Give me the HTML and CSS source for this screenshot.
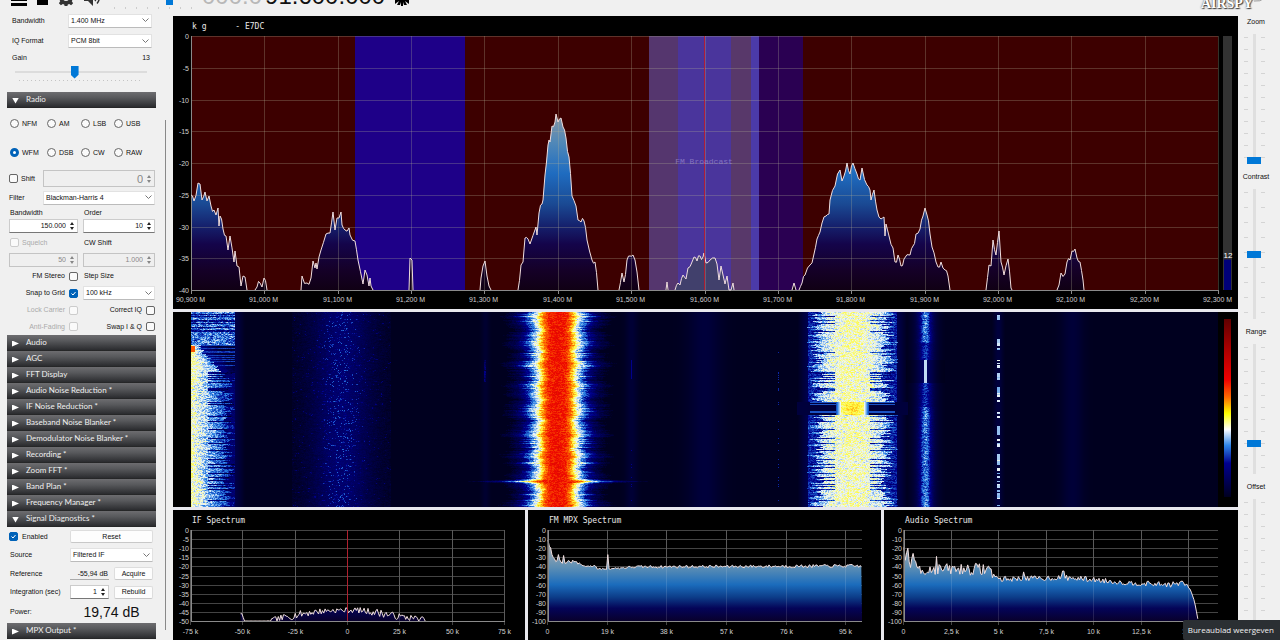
FILE: index.html
```html
<!DOCTYPE html>
<html lang="en">
<head>
<meta charset="utf-8">
<title>SDR receiver</title>
<link rel="stylesheet" href="styles.css">
</head>
<body>
<div class="app">
  <header class="toolbar">
    <button class="tool" aria-label="Menu"><svg width="16" height="14" viewBox="0 0 16 14"><path d="M0 0h16v3H0zM0 6h16v3H0zM0 11h16v3H0z"/></svg></button>
    <button class="tool" aria-label="Stop"><svg width="11" height="12" viewBox="0 0 11 12"><path d="M0 0h11v11H0z"/></svg></button>
    <button class="tool" aria-label="Settings"><svg width="16" height="16" viewBox="0 0 16 16"><path fill="#333" fill-rule="evenodd" d="M6.600 0h2.800l.4 2.200 1.400.6 1.900-1.300 2 2-1.300 1.900.6 1.400 1.600.4v2.200l-1.600.5-.6 1.400 1.300 1.900-2 2-1.900-1.300-1.400.6L9.400 16H6.600l-.4-1.500-1.400-.6-1.900 1.300-2-2 1.300-1.900-.6-1.400L0 9.400V7.200l1.600-.4.6-1.400L.9 3.500l2-2 1.900 1.300 1.400-.6zM8 5a3 3 0 1 0 0 6 3 3 0 0 0 0-6z"/></svg></button>
    <button class="tool" aria-label="Mute"><svg width="18" height="16" viewBox="0 0 18 16"><path fill="#333" d="M0 5h4l5-5v16l-5-5H0z"/><path fill="none" stroke="#333" stroke-width="1.500" d="M11 5q2 3 0 6M13 2.500q4.500 5.500 0 11"/></svg></button>
    <input class="volume" type="range" min="0" max="100" value="74" aria-label="Volume">
    <div class="frequency"><span class="leading">000.0</span><span>91.600.000</span></div>
    <button class="tool" aria-label="Tuning mode"><svg width="14" height="14" viewBox="0 0 14 14"><path d="M0 12V0l6 7V0h2v7l6-7v12l-4-3 2 4H9l-1-3v4H6v-4l-1 3H2l2-4z"/></svg></button>
    <div class="logo">AIRSPY<svg width="14" height="14" viewBox="0 0 14 14"><path fill="none" stroke="#999" d="M1 4q6 1 11-3"/></svg></div>
  </header>

  <aside class="sidebar">
    <div class="controls">
      <div class="form-row"><label for="sr">Bandwidth</label><select id="sr" class="w-source"><option>1.400 MHz</option></select></div>
      <div class="form-row tall"><label for="iq">IQ Format</label><select id="iq" class="w-source"><option>PCM 8bit</option></select></div>
      <div class="form-row short"><label for="gain">Gain</label><output class="gain-value" for="gain">13</output></div>
      <input class="gain" id="gain" type="range" min="0" max="29" value="13">
      <button class="section open">Radio</button>

      <div class="modes">
        <label><input type="radio" name="mode">NFM</label>
        <label><input type="radio" name="mode">AM</label>
        <label><input type="radio" name="mode">LSB</label>
        <label><input type="radio" name="mode">USB</label>
        <label><input type="radio" name="mode" checked>WFM</label>
        <label><input type="radio" name="mode">DSB</label>
        <label><input type="radio" name="mode">CW</label>
        <label><input type="radio" name="mode">RAW</label>
      </div>

      <div class="wide-row"><label><input type="checkbox">Shift</label><span class="spin big off"><input type="text" value="0" aria-label="Shift frequency" disabled><i></i></span></div>
      <div class="wide-row"><label for="filter">Filter</label><select id="filter"><option>Blackman-Harris 4</option></select></div>
      <div class="pairs">
        <label class="caption" for="bw">Bandwidth</label><label class="caption" for="order">Order</label>
        <span class="spin"><input id="bw" type="text" value="150.000"><i></i></span><span class="spin"><input id="order" type="text" value="10"><i></i></span>
        <label class="off"><input type="checkbox" disabled>Squelch</label><label for="cw">CW Shift</label>
        <span class="spin off"><input type="text" value="50" aria-label="Squelch level" disabled><i></i></span><span class="spin off"><input id="cw" type="text" value="1.000" disabled><i></i></span>
        <label class="end">FM Stereo<input type="checkbox"></label><label for="step">Step Size</label>
        <label class="end">Snap to Grid<input type="checkbox" checked></label><select id="step"><option>100 kHz</option></select>
        <label class="end off">Lock Carrier<input type="checkbox" disabled></label><label class="end">Correct IQ<input type="checkbox"></label>
        <label class="end off">Anti-Fading<input type="checkbox" disabled></label><label class="end">Swap I &amp; Q<input type="checkbox"></label>
      </div>

      <button class="section">Audio</button>
      <button class="section">AGC</button>
      <button class="section">FFT Display</button>
      <button class="section">Audio Noise Reduction *</button>
      <button class="section">IF Noise Reduction *</button>
      <button class="section">Baseband Noise Blanker *</button>
      <button class="section">Demodulator Noise Blanker *</button>
      <button class="section">Recording *</button>
      <button class="section">Zoom FFT *</button>
      <button class="section">Band Plan *</button>
      <button class="section">Frequency Manager *</button>
      <button class="section open">Signal Diagnostics *</button>

      <div class="diagnostics">
        <label><input type="checkbox" checked>Enabled</label><button class="btn span">Reset</button>
        <label for="src">Source</label><select id="src" class="span"><option>Filtered IF</option></select>
        <label for="ref">Reference</label><input id="ref" class="reading" type="text" value="-55,94 dB" readonly><button class="btn">Acquire</button>
        <label for="int">Integration (sec)</label><span class="spin"><input id="int" type="text" value="1"><i></i></span><button class="btn">Rebuild</button>
        <span>Power:</span><output class="power span">19,74 dB</output>
      </div>
      <button class="section">MPX Output *</button>
    </div>
    <div class="scrollbar"></div>
  </aside>

  <main class="displays">
    <section class="panel" id="spectrum"></section>
    <section class="panel waterfall">
      <canvas id="waterfall"></canvas>
      <div class="scale"></div>
    </section>
    <div class="small-panels">
      <section class="panel" id="if"></section>
      <section class="panel" id="mpx"></section>
      <section class="panel" id="audio"></section>
    </div>
  </main>

  <aside class="levels">
    <label for="zoom">Zoom</label><input id="zoom" type="range" min="0" max="100" value="0">
    <label for="contrast">Contrast</label><input id="contrast" class="sparse" type="range" min="0" max="100" value="50">
    <label for="range">Range</label><input id="range" type="range" min="0" max="100" value="22">
    <label for="offset">Offset</label><input id="offset" type="range" min="0" max="100" value="0">
  </aside>
</div>
<div class="tooltip" role="tooltip">Bureaublad weergeven</div>
<script src="app.js"></script>
</body>
</html>
```

FILE: styles.css
```css
* { box-sizing: border-box; }

body {
  margin: 0;
  background: #f0f0f0;
  color: #111;
  font: 7px/10px "Liberation Sans", Arial, sans-serif;
  overflow: hidden;
}

button, input, select, output { font: inherit; color: inherit; margin: 0; }

.app {
  display: grid;
  grid-template: 12px minmax(0, 1fr) / 173px minmax(0, 1fr) 42px;
  height: 100vh;
}

/* toolbar */
.toolbar {
  grid-column: 1 / -1;
  display: flex;
  align-items: flex-end;
  gap: 10px;
  padding: 0 28px 6px 11px;
  overflow: hidden;
}
.tool { border: 0; padding: 0; background: none; line-height: 0; flex: none; }
.tool svg { display: block; }
.volume {
  appearance: none;
  width: 80px;
  height: 16px;
  margin: 0 0 -3px 0;
  background: repeating-linear-gradient(90deg, #ccc 0 1px, transparent 1px 11px) 2px 100% / 78px 2px no-repeat;
}
.volume::-webkit-slider-thumb { appearance: none; width: 7px; height: 12px; margin-top: -4px; background: #0078d7; }
.frequency { font-size: 24px; line-height: 24px; color: #111; margin-bottom: -2px; display: flex; gap: 3px; }
.leading { color: #b8b8b8; }
.logo {
  display: flex;
  align-items: flex-end;
  margin: 0 -15px -5px auto;
  font: bold 14px/14px "Liberation Serif", serif;
  color: #fff;
  text-shadow: 0 0 2px #333, 1px 1px 1px #444;
}

/* sidebar */
.sidebar { display: flex; padding-left: 7px; overflow: hidden; }
.controls { width: 149px; flex: none; }
.scrollbar { width: 1px; margin: 108px 0 10px 9px; background: #888; }
.controls label { display: flex; align-items: center; gap: 4px; white-space: nowrap; }

.form-row { display: flex; align-items: center; justify-content: space-between; height: 17px; padding: 0 4px 0 5px; }
.form-row.tall { height: 24px; }
.form-row.short { height: 9px; }
.gain-value { padding-right: 2px; }

select {
  appearance: none;
  width: 100%;
  height: 14px;
  padding: 0 10px 0 2px;
  border: 1px solid #e2e2e2;
  border-bottom-color: #bbb;
  border-radius: 1px;
  background: #fff url("data:image/svg+xml,%3Csvg xmlns='http://www.w3.org/2000/svg' width='7' height='5'%3E%3Cpath d='M.5 .5l3 3 3-3' fill='none' stroke='%23777'/%3E%3C/svg%3E") right 2px center no-repeat;
}
.w-source { width: 84px; }

.gain {
  appearance: none;
  display: block;
  width: 132px;
  height: 20px;
  margin: 0 8px 10px;
  background:
    linear-gradient(#dcdcdc, #dcdcdc) 0 9px / 100% 2px no-repeat,
    repeating-linear-gradient(90deg, #c4c4c4 0 1px, transparent 1px 4px) 4px 18px / 124px 1px no-repeat;
}
.gain::-webkit-slider-thumb {
  appearance: none;
  width: 8px;
  height: 13px;
  background: #0078d7;
  clip-path: polygon(0 0, 100% 0, 100% 72%, 50% 100%, 0 72%);
}

.section {
  display: flex;
  align-items: center;
  gap: 7px;
  width: 100%;
  height: 16px;
  padding: 0 0 2px 5px;
  border: 0;
  background: linear-gradient(#6d6d70, #58595c 35%, #2c2d30 92%, #222);
  color: #f0f0f0;
  font: 8px/12px Lato, sans-serif;
  text-align: left;
}
.section::before {
  content: "";
  width: 7px;
  height: 6px;
  margin-top: 3px;
  background: #fff;
  clip-path: polygon(0 0, 100% 50%, 0 100%);
}
.section.open::before { clip-path: polygon(0 0, 100% 0, 50% 100%); }

input[type="radio"], input[type="checkbox"] {
  appearance: none;
  flex: none;
  width: 9px;
  height: 9px;
  border: 1px solid #666;
  background: #fafafa;
}
input[type="radio"] { border-radius: 50%; }
input[type="radio"]:checked { border: 3px solid #0062b8; background: #fff; }
input[type="checkbox"] { border-radius: 2px; }
input[type="checkbox"]:checked {
  border-color: #0062b8;
  background: #0062b8 url("data:image/svg+xml,%3Csvg xmlns='http://www.w3.org/2000/svg' width='7' height='7'%3E%3Cpath d='M1.500 3.500l1.500 1.500 2.500-3' fill='none' stroke='white'/%3E%3C/svg%3E") center no-repeat;
}
input[type="checkbox"]:disabled { border-color: #ccc; }
label.off { color: #aaa; }

.modes {
  display: grid;
  grid-template-columns: 37px 34px 33px auto;
  grid-auto-rows: 29px;
  padding: 1px 0 2px 3px;
}
.modes label { gap: 3px; }

.wide-row { display: grid; grid-template-columns: 34px 1fr; align-items: center; height: 19px; padding: 0 1px 0 2px; }
.wide-row label { gap: 3px; }

.spin {
  display: flex;
  align-items: center;
  width: 100%;
  height: 14px;
  border: 1px solid #ccc;
  border-bottom-color: #777;
  background: #fff;
}
.spin input { flex: 1; width: 0; min-width: 0; padding: 0 1px; border: 0; background: none; text-align: right; }
.spin i {
  width: 10px;
  height: 10px;
  background: url("data:image/svg+xml,%3Csvg xmlns='http://www.w3.org/2000/svg' width='6' height='8'%3E%3Cpath d='M3 0l2 3H1zM3 8l2-3H1z' fill='%23222'/%3E%3C/svg%3E") center no-repeat;
}
.spin.off { background: #efefef; border-color: #c4c4c4; color: #888; }
.spin.off i { opacity: .5; }
.spin.big { height: 17px; font-size: 11px; }

.pairs {
  display: grid;
  grid-template: 11px 16px 17px 17px 16px 18px 16px 17px / 69px 1fr;
  column-gap: 5px;
  align-items: center;
  padding: 0 1px 0 2px;
}
.pairs label { gap: 3px; padding-left: 1px; }
.pairs label.end { justify-content: flex-end; padding: 0; gap: 4px; }

.diagnostics {
  display: grid;
  grid-template: 19px 18px 19px 18px 22px / 56px 1fr 1fr;
  column-gap: 5px;
  align-items: center;
  padding: 0 3px 0 2px;
}
.diagnostics label, .diagnostics > span:not(.spin) { padding-left: 1px; margin-right: -5px; }
.diagnostics label:first-child { padding: 0; }
.span { grid-column: span 2; }
.btn { width: 100%; height: 13px; padding: 0; border: 1px solid #ddd; border-bottom-color: #c8c8c8; border-radius: 2px; background: #fdfdfd; line-height: 10px; }
.reading { width: 100%; height: 12px; padding: 0 1px; border: 0; border-bottom: 1px solid #aaa; background: none; text-align: right; }
.power { font-size: 14px; line-height: 16px; text-align: center; color: #111; }

/* displays */
.displays {
  display: grid;
  grid-template-rows: minmax(0, 293fr) minmax(0, 195fr) minmax(0, 130fr);
  gap: 3px;
  padding-top: 4px;
  background: linear-gradient(#f0f0f0 4px, #e8e8ee 4px);
}
.panel { position: relative; min-width: 0; overflow: hidden; background: #000; }
.panel svg { display: block; width: 100%; height: 100%; }
.small-panels { display: grid; grid-template-columns: minmax(0, 352fr) minmax(0, 354fr) minmax(0, 354fr); gap: 3px; }
.waterfall { display: grid; grid-template-columns: minmax(0, 1fr) 7px; column-gap: 6px; padding: 0 7px 0 18px; }
.waterfall canvas { display: block; width: 100%; height: 100%; min-height: 0; }
.scale {
  margin: 7px 0 10px;
  background: linear-gradient(#600000, #b00000 18%, #f00000 34%, #ff6a00 44%, #ffff00 53%, #ffffff 62%, #2e86e8 71%, #000090 81%, #000020);
}

.axis { font: 7px "Liberation Sans", Arial, sans-serif; fill: #d0d0d0; }
.title { font: 8px "DejaVu Sans Mono", monospace; fill: #e8e8e8; white-space: pre; }
.band-name { font: 8px "Liberation Mono", monospace; fill: #a99bd8; opacity: .6; }
.meter-value { font: 8px "Liberation Sans", Arial, sans-serif; fill: #fff; }
.grid { stroke: #b4b496; stroke-opacity: .28; }
.small-grid { stroke: #444; }
.frame { stroke: #8a8a8a; }
.trace { fill: none; stroke: #f0dede; stroke-width: 1; }
.center { stroke: #c01828; stroke-opacity: .85; }

/* right sliders */
.levels { display: flex; flex-direction: column; align-items: center; padding-top: 4px; padding-right: 10px; overflow: hidden; }
.levels label { margin-left: 4px; height: 11px; line-height: 12px; flex: none; }
.levels input {
  appearance: none;
  writing-mode: vertical-lr;
  direction: rtl;
  flex: none;
  width: 24px;
  height: 130px;
  margin: 7px 0;
  background:
    linear-gradient(#dfdfdf, #dfdfdf) center / 3px 100% no-repeat,
    repeating-linear-gradient(#d4d4d4 0 1px, transparent 1px 12px) 2px 3px / 4px 124px no-repeat,
    repeating-linear-gradient(#d4d4d4 0 1px, transparent 1px 12px) 19px 3px / 4px 124px no-repeat;
}
.levels .sparse {
  background:
    linear-gradient(#dfdfdf, #dfdfdf) center / 3px 100% no-repeat,
    repeating-linear-gradient(#d4d4d4 0 1px, transparent 1px 15px) 2px 3px / 4px 124px no-repeat,
    repeating-linear-gradient(#d4d4d4 0 1px, transparent 1px 15px) 19px 3px / 4px 124px no-repeat;
}
.levels input::-webkit-slider-thumb { appearance: none; width: 14px; height: 7px; background: #0078d7; }

.tooltip {
  position: absolute;
  right: 0;
  bottom: 0;
  padding: 5px 6px 5px 5px;
  border-radius: 2px 0 0 2px;
  background: #2b2f33;
  color: #f0f0f0;
  font: 8px/10px "Open Sans", sans-serif;
}
```

FILE: app.js
```js
let seed = 7;
const rnd = () => {
  seed = (seed * 1664525 + 1013904223) >>> 0;
  return seed / 4294967296;
};
const esc = s => String(s).replace(/&/g, "&amp;");
const line = (x1, y1, x2, y2, c) => `<path class="${c}" d="M${x1} ${y1}L${x2} ${y2}"/>`;
const text = (x, y, s, c, anchor) => `<text x="${x}" y="${y}" class="${c}" text-anchor="${anchor || "start"}">${esc(s)}</text>`;

/* Signal groups: [position across a 1027 wide span, depth across 254]. */
const groups = [
  "0,159 3,165 7,147 9,148 11,164 14,156 16,165 18,160 20,170 23,174 25,179 27,172 28,190 29,180 32,193 35,200 37,214 39,200 43,226 44,215 46,230 48,231 50,250 52,240 54,241 56,254",
  "64,254 66,251 69,247 71,251 73,242 76,254",
  "110,254 111,240 116,247 120,242 122,225 124,232 125,227 126,233 128,221 130,214 135,198 139,197 142,176 144,194 146,182 148,182 150,176 151,189 154,194 158,192 159,199 164,205 167,224 172,248 174,234 176,239 178,250 179,242 180,250 182,254",
  "218,254 219,222 221,224 222,254",
  "289,254 290,242 292,230 294,225 296,240 298,250 300,254",
  "327,254 330,229 332,226 334,202 337,203 339,208 345,191 346,199 348,177 351,168 352,164 354,139 357,109 358,104 359,106 361,90 364,86 365,78 367,86 370,82 372,91 375,102 378,121 381,160 385,170 387,184 390,186 393,185 396,204 401,224 404,226 407,254",
  "428,254 431,237 433,246 436,224 439,220 442,219 444,224 446,236 448,254",
  "475,254 476,246 477,254",
  "484,254 487,247 489,249 492,239 495,243 497,232 501,226 503,221 506,225 509,220 512,221 513,217 515,227 519,224 524,222 526,228 528,244 530,230 532,239 534,248 536,240 538,254 542,247 543,254",
  "601,254 603,247 605,254",
  "608,254 611,247 614,239 619,229 623,218 626,203 629,196 631,187 635,180 638,178 639,164 644,150 649,134 651,145 653,140 656,127 659,138 662,127 666,138 669,144 671,132 676,149 679,154 680,164 683,154 686,174 690,183 693,181 694,200 695,188 698,200 702,212 704,226 707,219 710,230 713,223 719,219 722,210 725,198 729,193 732,180 734,172 736,179 739,198 741,211 745,226 747,231 750,226 754,234 757,240 759,254",
  "795,254 798,229 800,230 802,204 805,219 808,195 810,226 813,239 817,223 820,252 821,254",
  "866,254 868,249 870,237 874,238 876,226 879,224 881,215 884,213 886,222 889,226 892,244 893,254"
];

function drawSpectrum() {
  const el = document.getElementById("spectrum");
  const W = el.clientWidth, H = el.clientHeight;
  const L = 18, T = 20, w = W - 38, h = H - 39;
  const X = v => L + v / 1027 * w, Y = v => T + v / 254 * h;
  const band = (a, b, c) => `<rect x="${X(a)}" y="${T}" width="${X(b) - X(a)}" height="${h}" fill="${c}"/>`;
  let s = `<defs><linearGradient id="deep" gradientUnits="userSpaceOnUse" x1="0" x2="0" y1="${T}" y2="${T + h}">
    <stop offset=".3" stop-color="#8a96a4"/><stop offset=".42" stop-color="#5088b8"/><stop offset=".54" stop-color="#1f6cc0"/>
    <stop offset=".66" stop-color="#1a4a94"/><stop offset=".75" stop-color="#15206c"/><stop offset=".82" stop-color="#14044a"/>
    <stop offset=".92" stop-color="#150028"/><stop offset="1" stop-color="#100014"/></linearGradient></defs>`;
  s += band(0, 1027, "#3d0000") + band(164, 274, "#1e0088") + band(458, 487, "#55366e") +
    band(487, 540, "#4a359c") + band(540, 560, "#58386a") + band(560, 568, "#4b3aa8") + band(568, 612, "#2a0052");
  const paths = groups.map(g => {
    const raw = g.split(" ").map(p => p.split(",").map(Number));
    const out = [];
    raw.forEach((p, i) => {
      if (i && p[0] - raw[i - 1][0] > 2) {
        const q = raw[i - 1];
        out.push([(p[0] + q[0]) / 2, Math.min(254, (p[1] + q[1]) / 2 + rnd() * 8 - 4)]);
      }
      out.push(p);
    });
    return {
      start: X(raw[0][0]),
      points: out.map(p => X(p[0]).toFixed(1) + " " + Y(p[1]).toFixed(1)).join("L")
    };
  });
  paths.forEach((p, i) => { s += `<path d="M${p.start} ${T + h}L${p.points}Z" fill="${i === 8 ? "#41406c" : "url(#deep)"}"/>`; });
  for (let i = 0; i <= 14; i++) {
    const x = Math.round(L + w * i / 14) + .5;
    s += line(x, T, x, T + h, "grid") + line(x, T + h, x, T + h + 4, "frame");
    s += text(x - 1, T + h + 12, (90900 + i * 100).toString().replace(/(\d\d)(\d+)/, "$1,$2") + " M", "axis", "middle");
  }
  for (let i = 0; i <= 8; i++) {
    const y = Math.round(T + h * i / 8) + .5;
    s += line(L, y, L + w, y, "grid") + text(L - 2, y + 2, i ? -5 * i : 0, "axis", "end");
  }
  s += line(L + .5, T, L + .5, T + h, "frame") + line(L, T + h + .5, L + w, T + h + .5, "frame");
  paths.forEach(p => { s += `<path class="trace" d="M${p.points}"/>`; });
  const mid = Math.round(X(513.5)) - .5;
  s += line(mid, T, mid, T + h, "center");
  s += text(X(513), T + h / 2 + 1, "FM Broadcast", "band-name", "middle");
  s += text(19, 13, "k g      - E7DC", "title");
  s += `<rect x="${W - 15}" y="${T}" width="9" height="${h}" fill="#333"/><rect x="${W - 14}" y="${T + h * .88}" width="7" height="${h * .12}" fill="#000078"/>`;
  s += text(W - 10, T + h * .875, "12", "meter-value", "middle");
  el.innerHTML = `<svg>${s}</svg>`;
}

/* Keypoints are [fraction of the span, dB, jitter in dB]; the trace is interpolated between them. */
function drawSmall(id, title, min, step, span, ticks, keys, spikes, center) {
  const el = document.getElementById(id);
  const W = el.clientWidth, H = el.clientHeight;
  const L = id === "if" ? 18 : 20, T = 20, w = W - L - 20, h = H - 39;
  const Y = d => T + h * Math.min(1, Math.max(0, d / min));
  let s = `<defs><linearGradient id="g-${id}" gradientUnits="userSpaceOnUse" x1="0" x2="0" y1="${T}" y2="${T + h}">
    <stop offset=".2" stop-color="#a0a8b0"/><stop offset=".4" stop-color="#6090b4"/><stop offset=".6" stop-color="#1b6cbc"/>
    <stop offset=".74" stop-color="#0c3c88"/><stop offset=".86" stop-color="#040458"/><stop offset="1" stop-color="#08002c"/></linearGradient></defs>`;
  ticks.forEach(([v, label]) => {
    const x = Math.round(L + w * v / span) - .5;
    s += line(x, T, x, T + h + 4, "small-grid") + text(x, T + h + 13, label, "axis", "middle");
  });
  for (let d = 0; d >= min; d -= step) {
    const y = Math.round(Y(d)) + .5;
    s += line(L, y, L + w, y, "small-grid") + text(L - 2, y + 2, d, "axis", "end");
  }
  const pts = [], last = keys[keys.length - 1][0];
  for (let x = keys[0][0] * w; x <= last * w; x += 1.3) {
    const f = x / w;
    let k = 0;
    while (k < keys.length - 2 && keys[k + 1][0] < f) k++;
    const a = keys[k], b = keys[k + 1], t = (f - a[0]) / (b[0] - a[0]);
    let d = a[1] + (b[1] - a[1]) * t + (rnd() - .5) * 2 * (a[2] + (b[2] - a[2]) * t);
    spikes.forEach(([sx, sd]) => { if (Math.abs(sx - f) < .0024) d = sd; });
    pts.push((L + x).toFixed(1) + " " + Y(d).toFixed(1));
  }
  const p = pts.join("L");
  s += `<path d="M${p}L${L + w * last} ${T + h}L${L + w * keys[0][0]} ${T + h}Z" fill="url(#g-${id})"/>`;
  ticks.forEach(([v]) => {
    const x = Math.round(L + w * v / span) - .5;
    s += `<path d="M${x} ${T}V${T + h}" stroke="#fff" stroke-opacity=".12"/>`;
  });
  s += `<path class="trace" d="M${p}"/>`;
  s += line(L + .5, T, L + .5, T + h, "frame") + line(L, T + h + .5, L + w, T + h + .5, "frame");
  const mid = Math.round(L + w / 2) - .5;
  if (center) s += line(mid, T, mid, T + h, "center");
  s += text(L + 1, 13, title, "title");
  el.innerHTML = `<svg>${s}</svg>`;
}

const stops = [[0, 0, 0, 26], [.2, 0, 0, 140], [.29, 40, 125, 225], [.38, 235, 245, 250], [.48, 255, 250, 60], [.56, 255, 130, 0], [.67, 240, 10, 0], [1, 100, 0, 0]];
function colour(v) {
  v = Math.max(0, Math.min(1, v));
  let i = 0;
  while (i < stops.length - 2 && stops[i + 1][0] < v) i++;
  const a = stops[i], b = stops[i + 1], t = (v - a[0]) / (b[0] - a[0]);
  return [1, 2, 3].map(k => a[k] + (b[k] - a[k]) * t);
}

function drawWaterfall() {
  const c = document.getElementById("waterfall");
  const W = c.clientWidth, H = c.clientHeight;
  c.width = W;
  c.height = H;
  const g = c.getContext("2d"), im = g.createImageData(W, H);
  const bump = (d, r) => Math.exp(-d * d / (r * r));
  const ramp = (d, pts) => {
    for (let i = 1; i < pts.length; i++) if (d < pts[i][0]) {
      const a = pts[i - 1], b = pts[i];
      return a[1] + (b[1] - a[1]) * (d - a[0]) / (b[0] - a[0]);
    }
    return 0;
  };
  let dot = 0, n = .5;
  for (let y = 0; y < H; y++) {
    const q = y / H * 195;
    const sL = rnd(), sR = rnd(), row = rnd();
    const gap = q > 89 && q < 103, dark = row > .84;
    const wob = 1 + .08 * Math.sin(q * .27) + .05 * Math.sin(q * .63) + (rnd() - .5) * .14;
    const burst = bump(q - 169, 1.3) * .9;
    const streak = rnd() > .8 ? .5 : 0;
    if (rnd() > .5) dot = rnd();
    for (let x = 0; x < W; x++) {
      const px = x / W * 1027;
      n = n * .35 + rnd() * .65;
      let v = .008;
      if (px < 55) {
        const lim = 31 + sL * 15;
        if (q < 33) v = .29 + (n - .5) * .2 - (row > .7 ? .1 : 0);
        else if (q < 60) {
          const reach = 4 + (q - 33) * .8 + sL * 6;
          v = px < reach ? .42 - .1 * px / reach + (n - .5) * .14 : (row > .72 ? .24 : Math.max(.05, .2 - (px - reach) / 120)) + (n - .5) * .06;
        } else v = px < lim ? .415 - px / 210 + (n - .5) * .16 - (dark && px > 16 ? .15 : 0) : .11 + n * .06;
        if (q > 33 && q < 40 && px < 4) v = .6;
        if (px >= 44) v = Math.max(.01, .08 * (1 - (px - 44) / 11));
      }
      const m = Math.abs(px - 150);
      if (m < 50) {
        v = .02 + .13 * bump(m, 30) + (n - .5) * .05;
        if (n > .86 - .16 * bump(m, 18)) v += .12 * rnd();
      }
      const d = Math.abs(px - 366) / (wob + burst * .85 + (rnd() - .5) * .06);
      if (d < 50) v = Math.max(v, ramp(d, [[0, .67], [8, .65], [12, .59], [16, .5], [19, .4], [23, .33], [30, .21], [38, .1], [50, .02]]) + (n - .5) * (d > 30 ? .06 : .11) + (d > 22 && d < 38 ? streak * .12 : 0));
      const e = px - 661, ae = Math.abs(e);
      if (ae < 56) {
        const side = e < 0 ? sL : sR, edge = 28 + side * 18;
        if (gap) v = ae < 12 ? .5 - ae * .004 + (n - .5) * .1 : (ae < 17 ? .38 - (ae - 12) * .03 : (row > .75 && ae < 43 ? .26 : .06));
        else if (ae < edge) v = .415 - ae * ae * .00007 + (n - .5) * .15 - (dark && ae > 17 ? .14 : 0);
        else v = ae < 45 ? .17 + n * .1 : .09 * Math.max(0, 1 - (ae - 45) / 11);
      }
      const f = Math.abs(px - 734);
      if (f < 20) {
        const fade = q > 30 && q < 95 ? .7 : 1;
        v = Math.max(v, .1 * bump(f, 13) + (.11 + n * .17) * bump(f, 6) * fade);
        if (q > 47 && q < 71) v = f < 2 ? .36 : .12 * bump(f, 10);
      }
      const h = Math.abs(px - 807);
      if (h < 7) v = Math.max(v, .06 * bump(h, 5));
      if (h < 1.1 && dot > .45) v = .27 + dot * .12;
      v += .05 * bump(px - 513, 17) + .045 * bump(px - 881, 11) + .04 * bump(px - 440, 6) + .03 * bump(px - 294, 4);
      if (Math.abs(px - 293.5) < 1 && q > 47 && q < 70) v += .18 * n;
      if (Math.abs(px - 440) < 1 && (q > 47 && q < 67 || q > 130 && row > .9)) v += .15;
      if (Math.abs(px - 587) < 1 && q > 25 && row > .86) v += .22;
      const rgb = colour(v), o = (y * W + x) * 4;
      im.data[o] = rgb[0];
      im.data[o + 1] = rgb[1];
      im.data[o + 2] = rgb[2];
      im.data[o + 3] = 255;
    }
  }
  g.putImageData(im, 0, 0);
}

function draw() {
  seed = 7;
  drawSpectrum();
  drawSmall("if", "IF Spectrum", -50, 5, 150,
    [[0, "-75 k"], [25, "-50 k"], [50, "-25 k"], [75, "0"], [100, "25 k"], [125, "50 k"], [150, "75 k"]],
    [[.158, -51, 0], [.24, -51, 0], [.25, -50, 1.500], [.3, -48, 2], [.37, -45.500, 2], [.44, -44.200, 1.500], [.53, -44, 1.500], [.6, -45.500, 2.200], [.66, -47.500, 1.800], [.74, -49, 1.500], [.75, -51, 0]],
    [[.16, -46], [.166, -48]], true);
  drawSmall("mpx", "FM MPX Spectrum", -100, 10, 100,
    [[0, "0"], [19, "19 k"], [38, "38 k"], [57, "57 k"], [76, "76 k"], [95, "95 k"]],
    [[0, -12, 1], [.02, -34, 3], [.06, -36, 3], [.08, -34, 2], [.11, -39, 1], [.15, -40, 1], [.16, -43, 1], [.22, -42, 1], [.28, -40.500, 1.500], [1, -39.500, 1.800]],
    [[.034, -27], [.05, -28], [.189, -27]]);
  drawSmall("audio", "Audio Spectrum", -100, 10, 165,
    [[0, "0"], [25, "2,5 k"], [50, "5 k"], [75, "7,5 k"], [100, "10 k"], [125, "12,5 k"], [150, "15 k"]],
    [[0, -26, 9], [.03, -36, 10], [.06, -44, 7], [.1, -43, 6], [.27, -43, 7], [.3, -54, 3], [.45, -53, 3], [.5, -52, 3], [.62, -55, 3], [.7, -58, 2.500], [.85, -60, 3], [.89, -58, 3], [.91, -64, 1], [.925, -78, 0], [.937, -100, 0]],
    [[.014, -20], [.103, -29], [.38, -46], [.507, -45]]);
  drawWaterfall();
}
draw();
addEventListener("resize", draw);
```
